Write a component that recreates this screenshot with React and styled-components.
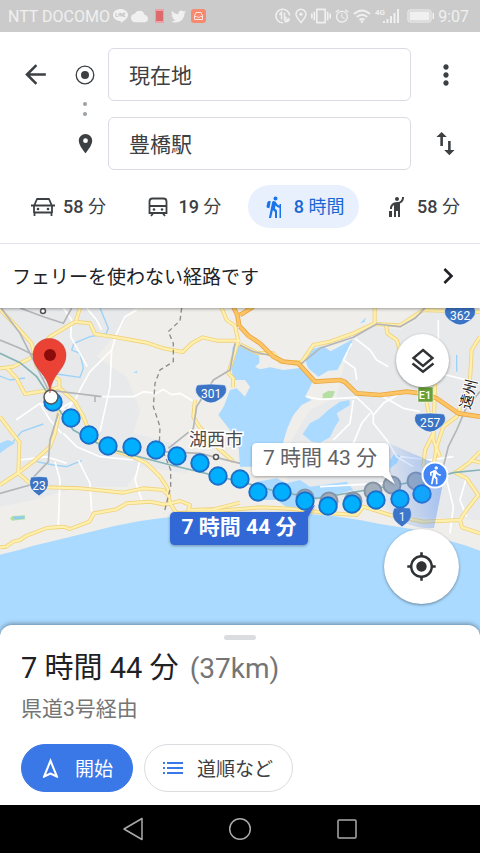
import React from 'react'
import styled, { createGlobalStyle } from 'styled-components';
import { FaTwitter } from 'react-icons/fa';
import {
    MdCloud, MdVibration, MdAlarm, MdArrowBack, MdMoreVert, MdSwapVert,
    MdLocationOn, MdHiking, MdHail, MdDirectionsWalk, MdChevronRight,
    MdMyLocation, MdOutlineNavigation
} from 'react-icons/md';

const GlobalStyle = createGlobalStyle`
  * {
    box-sizing: border-box;
  }
  body {
    margin: 0;
    background: #fff;
    font-family: Roboto, "Noto Sans CJK JP", sans-serif;
    color: #202124;
  }
  button, input {
    font: inherit;
    color: inherit;
    margin: 0;
    padding: 0;
    border: 0;
    background: none;
  }
  svg {
    display: block;
    flex: none;
  }
`;

const Page = styled.div`
  display: flex;
  flex-direction: column;
  min-height: 100vh;
`;

/* status bar */
const StatusBar = styled.div`
  display: flex;
  align-items: center;
  justify-content: space-between;
  height: 32px;
  padding: 0 11px 0 8px;
  background: #cbcbcb;
  color: #f0f0f0;
  font-size: 16px;
`;

const StatusGroup = styled.div`
  display: flex;
  align-items: center;
  gap: 3px;
`;

/* search */
const Search = styled.header`
  background: #fff;
  border-bottom: 1px solid #e4e5ec;
  padding: 16px 0 15px;
`;

const Places = styled.div`
  display: grid;
  grid-template-columns: 70px 30px 1fr 69px;
  grid-template-rows: 53px 53px;
  row-gap: 16px;
`;

const IconButton = styled.button`
  display: flex;
  align-items: center;
  justify-content: center;
  color: #3c4043;
`;

const Track = styled.div`
  grid-column: 2;
  grid-row: 1 / 3;
  display: flex;
  flex-direction: column;
  align-items: center;
  justify-content: space-between;
  padding: 17px 0 15px;
  color: #3c4043;
`;

const PlaceInput = styled.input`
  grid-column: 3;
  min-width: 0;
  margin-left: 8px;
  padding: 0 20px 2px;
  border: 1px solid #dadce3;
  border-radius: 6px;
  background: #fff;
  color: #3c4043;
  font-size: 21px;
  outline: none;
`;

const Modes = styled.nav`
  display: flex;
  justify-content: space-between;
  padding: 15px 6px 0 17px;
`;

const Mode = styled.button`
  display: flex;
  align-items: center;
  gap: 8px;
  height: 43px;
  padding: 0 14px;
  border-radius: 22px;
  font-size: 18px;
  white-space: nowrap;
  background: ${props => (props.$active ? '#e8f0fe' : 'transparent')};
  color: ${props => (props.$active ? '#1967d2' : '#3c4043')};
`;

const Time = styled.span`
  padding-bottom: 3px;

  b {
    font-weight: 500;
  }
`;

const Notice = styled.button`
  display: flex;
  align-items: center;
  justify-content: space-between;
  height: 64px;
  padding: 0 16px 0 12px;
  background: #fff;
  font-size: 19px;
  text-align: left;
  box-shadow: 0 1px 3px rgba(0, 0, 0, 0.35);
  clip-path: inset(0 0 -6px 0);
  z-index: 1;
`;

const Label = styled.span`
  padding-bottom: 2px;
`;

/* map */
const MapArea = styled.main`
  position: relative;
  flex: 1;
  min-height: 317px;
`;

const Canvas = styled.svg`
  position: absolute;
  top: 0;
  left: 0;
  width: 100%;
  height: calc(100% + 15px);
`;

const Fab = styled.button`
  position: absolute;
  right: ${props => props.$right}px;
  ${props => props.$edge}: ${props => props.$offset}px;
  display: flex;
  align-items: center;
  justify-content: center;
  width: ${props => props.$size}px;
  height: ${props => props.$size}px;
  border-radius: 50%;
  background: #fff;
  color: #303336;
  box-shadow: 0 1px 3px rgba(0, 0, 0, 0.4);
`;

/* bottom sheet */
const Sheet = styled.section`
  position: relative;
  padding: 10px 21px 13px;
  border-radius: 12px 12px 0 0;
  background: #fff;
  box-shadow: 0 -1px 5px rgba(0, 0, 0, 0.4);
`;

const Handle = styled.div`
  width: 32px;
  height: 5px;
  margin: 0 auto;
  border-radius: 3px;
  background: #dadce0;
`;

const Duration = styled.h1`
  margin: 10px 0 0;
  font-size: 29px;
  line-height: 36px;
  font-weight: 400;
`;

const Distance = styled.span`
  margin-left: 4px;
  font-size: 28px;
  line-height: 28px;
  color: #757575;
`;

const Via = styled.p`
  margin: 9px 0 0;
  font-size: 21px;
  line-height: 28px;
  color: #757575;
`;

const Actions = styled.div`
  display: flex;
  gap: 11px;
  margin-top: 21px;
`;

const Action = styled.button`
  display: flex;
  align-items: center;
  gap: 12px;
  height: 48px;
  padding: 0 19px 0 16px;
  border: 1px solid ${props => (props.$primary ? '#3b78e7' : '#dadce0')};
  border-radius: 24px;
  background: ${props => (props.$primary ? '#3b78e7' : '#fff')};
  color: ${props => (props.$primary ? '#fff' : '#3c4043')};
  font-size: 19px;
`;

const NavBar = styled.nav`
  position: relative;
  display: grid;
  grid-template-columns: repeat(3, 107px);
  justify-content: center;
  height: 48px;
  background: #000;
`;

const NavButton = styled.button`
  display: flex;
  align-items: center;
  justify-content: center;
`;

const modes = [
    { count: 58, unit: '分', name: '車', icon: <CarIcon /> },
    { count: 19, unit: '分', name: '電車', icon: <TrainIcon /> },
    { count: 8, unit: '時間', name: '徒歩', icon: <MdHiking size={24} color="#1a73e8" />, active: true },
    { count: 58, unit: '分', name: 'タクシー', icon: <MdHail size={24} /> },
];

// Terrain paths use three units for one map pixel
const urban = [
    'M0 24 H400 L350 100 L290 170 L380 230 L420 330 L400 400 L520 430 L600 470 L560 520 L420 500 L380 560 L240 560 L100 600 L0 620 Z',
    'M1050 120 L1120 80 L1200 90 L1300 24 H1440 V660 L1240 650 L1120 620 L900 600 L860 560 L870 430 L930 330 L1010 290 Z',
];

const lakes = [
    'M720 138 L750 152 L778 168 L778 190 L765 200 L780 208 L810 202 L850 210 L900 204 L925 215 L940 240 L930 262 L915 290 L935 300 L905 315 L880 345 L862 385 L848 432 L860 450 L860 500 L720 500 L715 430 L690 390 L655 345 L672 318 L690 270 L710 265 L735 290 L750 260 L735 240 L700 240 L692 190 L698 140 Z',
    'M925 150 L970 138 L992 154 L1058 118 L1050 150 L1025 185 L1012 210 L985 212 L955 230 L925 205 L918 188 Z',
    'M908 402 L930 370 L958 355 L985 330 L1020 305 L1048 300 L1050 315 L1010 340 L1018 360 L1005 380 L990 412 L960 428 L935 425 Z',
    'M770 545 L830 535 L860 550 L900 540 L930 560 L1040 545 L1060 570 L940 600 L910 625 L860 622 L830 600 L790 600 Z',
    'M0 430 L24 420 L46 428 L20 445 L0 460 Z',
    'M1170 480 L1182 462 L1200 468 L1190 490 L1170 505 Z',
    'M400 218 L410 212 L412 220 Z',
    'M1080 70 L1098 52 L1094 66 Z',
];

const sea = 'M0 764 L60 749 L100 737 L200 713 L270 696 L340 679 L420 663 L510 651 L640 642 L925 642 L1000 648 L1080 660 L1140 672 L1240 688 L1320 715 L1400 737 L1440 752 V1030 H0 Z';

const streams = [
    'M300 24 L325 85 L318 102 L270 110 L222 130 L215 150 L240 160 L250 205 L240 232 L170 222 L130 235',
    'M0 228 L30 240 L75 234',
    'M40 425 L65 395 L130 372',
    'M110 485 L160 495 L200 500 L245 482',
    'M1370 165 V215', 'M1260 115 L1268 150',
];

const lanes = [
    'M410 30 L375 50 L350 100 L335 150 L270 215 L245 260 L225 300 L175 330',
    'M190 24 L215 60 L212 110 L262 200',
    'M260 24 L290 60 L305 90',
    'M335 150 L330 260 L300 395',
    'M300 290 L400 290 L430 275 L470 280 L490 268 L515 284 L540 280 L590 310',
    'M48 360 L120 310 L200 330 L225 300', 'M190 400 L230 440 L300 470 L400 480',
    'M120 310 L150 360 L185 400', 'M60 480 L140 470 L200 490',
    'M165 485 L180 540 L175 675', 'M235 480 L270 550 L275 635', 'M420 480 L405 540 L425 600',
    'M1065 115 L1110 150 L1130 180 L1165 200', 'M1055 130 L1030 180 L1065 205 L1070 240',
    'M920 290 L960 298 L1070 292 L1110 330 L1120 345 L1120 370 L1160 420 L1190 470 L1240 500',
    'M1120 345 L1150 310 L1200 280', 'M1110 340 L1085 370 L1060 430',
    'M1150 290 L1210 325 L1260 335', 'M1315 60 V140', 'M1320 220 L1400 240',
    'M1060 300 L1050 370 L1000 420', 'M1330 500 L1360 620 L1350 700', 'M1400 530 L1380 600 L1400 650',
    'M1200 470 L1290 480 L1360 470', 'M960 560 L1150 550',
];

const rails = [
    'M0 20 L60 100 L110 200 L145 270', 'M0 120 L60 145 L130 180',
    'M60 24 L130 50 L190 70 L215 24', 'M145 270 L305 290 M285 290 V306',
    'M175 340 L150 420 L145 485 L102 530 L90 555 L0 580',
    'M505 445 L580 385 L590 320 L640 240 L690 210 L705 130',
    'M480 455 L600 460 L720 490',
    'M720 135 L760 155 L820 168 L850 188 L905 190 L960 145 L1060 112 L1130 72 L1200 80 L1245 55 L1275 24',
    'M1440 275 L1400 320 L1370 390 L1345 440 L1330 500',
];

const roads = [
    'M0 205 L40 200 L90 175 L150 110 L225 65 L270 70 L285 102 L350 112 L440 128 L490 145 L548 156 L575 130 L608 112 L650 122 L720 122',
    'M240 24 L228 62',
    'M0 28 L50 80 L95 130 L110 200 L178 240 L178 262 L150 270 L75 282 L50 235 L22 205',
    'M180 265 L225 305 L250 350 L275 410 L335 450 L400 470 L440 490 L480 530 L503 565 L510 610 L530 640',
    'M178 330 L165 400 L150 440 L100 485 L50 522 L0 555',
    'M0 350 L30 390 L58 425 L55 520 L90 550 L145 562 L240 565 L370 578 L430 565 L490 570 L508 590',
    'M0 742 L18 740 L40 725 L60 720 L78 708 L140 684 L190 680 L210 687 L268 665 L282 640 L350 628 L380 610 L450 605 L495 614 L540 603 L570 615 L565 630 L640 628 L720 608',
    'M665 24 L680 60 L705 78 L715 122 L685 220 L700 235 L698 262',
    'M585 300 L580 350 L598 380 L650 440 L700 485',
    'M530 640 L640 634 L780 622 L870 626 L970 638 L1070 645 L1090 620 L1170 645 L1270 665 L1380 660 L1400 630 L1435 585 L1400 535 L1360 515',
    'M1380 660 L1386 682 L1440 700',
    'M720 133 L770 158 L820 160 L842 186 L905 186 L940 135 L990 125 L1060 100 L1120 72 L1200 76 L1270 30 L1440 36',
    'M1124 24 V70', 'M1158 76 L1162 100 L1190 120 L1200 150',
    'M1305 250 L1300 420 L1320 470', 'M1285 260 L1280 310 L1300 400 L1275 450 L1270 500',
    'M1440 110 L1415 150 L1410 240 L1370 350 L1330 380 L1310 440 L1300 500',
    'M1440 455 L1405 490 L1370 515', 'M1410 480 L1440 488',
];

const motorways = [
    'M720 80 L745 107 L780 130 L820 170 L850 185 L895 190 L945 245 L1020 240 L1035 246 L1070 280 L1140 285 L1220 275 L1260 280 L1310 295 L1375 340 L1440 350',
    'M690 0 L712 45 L718 80', 'M720 45 L760 20',
];

const route = [
    [53, 94], [71, 110], [89, 127], [108, 138], [132, 139], [156, 142], [177, 148], [200, 155],
    [218, 168], [240, 171], [258, 184], [282, 184], [305, 193], [328, 198], [352, 196], [376, 192],
    [400, 191], [422, 186],
];

const otherRoute = [[305, 190], [329, 193], [353, 193], [373, 183], [392, 177], [416, 173]];

function CarIcon() {
    return (
        <svg width="24" height="20" viewBox="0 0 24 20" fill="none" stroke="currentColor" strokeWidth="1.800">
            <path d="M0 8.500H24M3 9L6 2H18L21 9V15.500H3ZM3.500 15V19M20.500 15V19" strokeLinejoin="round" />
            <circle cx="7" cy="12" r="1.300" fill="currentColor" stroke="none" />
            <circle cx="17" cy="12" r="1.300" fill="currentColor" stroke="none" />
        </svg>
    )
}

function TrainIcon() {
    return (
        <svg width="24" height="24" viewBox="0 0 24 24" fill="none" stroke="currentColor" strokeWidth="1.800">
            <path d="M3.500 18V6.500q0-3 3-3h11q3 0 3 3V18zM3.500 11h17M7 18.500l-2 2.500M17 18.500l2 2.500" />
            <circle cx="8" cy="14.500" r="1.300" fill="currentColor" stroke="none" />
            <circle cx="16" cy="14.500" r="1.300" fill="currentColor" stroke="none" />
        </svg>
    )
}

function Status() {
    return (
        <StatusBar>
            <StatusGroup>
                <span>NTT DOCOMO</span>
                <svg width="15" height="16" viewBox="0 0 15 16" fill="currentColor">
                    <path d="M7.500 1C11.700 1 15 3.600 15 7C15 10.500 11 13 7.500 15C8 13.800 8 13 7 13C3 12.700 0 10.200 0 7C0 3.600 3.300 1 7.500 1Z" />
                    <path d="M3 5V8.500H4.800M6 5V8.500M7.200 8.500V5L9.200 8.500V5M12.300 5H10.600V8.500H12.300M10.600 6.800H12" fill="none" stroke="#bbb" strokeWidth="0.800" />
                </svg>
                <MdCloud size={17} />
                <svg width="17" height="16" viewBox="0 0 17 16">
                    <rect x="4" y="1" width="9" height="14" fill="#f0a0a0" />
                    <rect x="5" y="3" width="7" height="10" fill="#dd6b6b" />
                </svg>
                <FaTwitter size={15} />
                <svg width="17" height="16" viewBox="0 0 17 16">
                    <rect x="2" y="1" width="15" height="14" rx="3" fill="#f58a70" />
                    <path d="M5.500 8l1.500-3.500h5L13.500 8v3.500h-8zM5.500 8.500h2q2 2.500 4 0h2" fill="none" stroke="#fbe3dd" />
                </svg>
            </StatusGroup>
            <StatusGroup>
                <svg width="16" height="16" viewBox="0 0 16 16" fill="none" stroke="currentColor" strokeWidth="1.500">
                    <path d="M14.500 7.500A6.800 6.800 0 1 0 8 14.800" />
                    <path d="M6.500 11.500V4.500L4.500 7M9.500 4.500v7l2-2.500" />
                    <path d="M9.500 14.500q0-4 5.500-4.500q0 5-5.500 4.500z" fill="currentColor" stroke="none" />
                </svg>
                <svg width="14" height="16" viewBox="0 0 14 16" fill="none" stroke="currentColor" strokeWidth="1.500">
                    <path d="M7 14.500C4 11 2 8.500 2 6.200A5 5 0 0 1 12 6.200C12 8.500 10 11 7 14.500Z" />
                    <circle cx="7" cy="6.200" r="1.600" fill="currentColor" stroke="none" />
                </svg>
                <MdVibration size={20} />
                <MdAlarm size={16} />
                <svg width="18" height="16" viewBox="0 0 18 16" fill="none" stroke="currentColor" strokeWidth="2">
                    <path d="M1 6q8-7 16 0M3.800 9q5.200-4.500 10.400 0M6.500 12q2.500-2 5 0" />
                    <circle cx="9" cy="13.800" r="1.200" fill="currentColor" stroke="none" />
                </svg>
                <svg width="30" height="16" viewBox="0 0 30 16" fill="currentColor">
                    <text x="1" y="7" fontSize="8" fontWeight="700">4G</text>
                    <path d="M9 13h2v2H9zM12.500 11h2v4h-2zM16 8h2v7h-2zM19.500 5h2v10h-2zM23 1h2v14h-2z" />
                </svg>
                <svg width="28" height="14" viewBox="0 0 28 14">
                    <rect x="1" y="1" width="23" height="12" rx="2" fill="none" stroke="currentColor" />
                    <path d="M2.500 2.500h20v9h-20zM25.500 4H27v6h-1.500z" fill="currentColor" />
                </svg>
                <span>9:07</span>
            </StatusGroup>
        </StatusBar>
    )
}

function Shield({ x, y, wide, children }) {
    return (
        <g transform={`translate(${x} ${y})`}>
            <path
                d={wide
                    ? 'M-14 -9Q0 -11 14 -9Q19 -1 8 6Q0 12 -8 6Q-19 -1 -14 -9Z'
                    : 'M-8 -9Q0 -10 8 -9Q12 0 5 6L0 10L-5 6Q-12 0 -8 -9Z'}
                fill="#3b74c4"
                stroke="#fff"
                strokeWidth="0.600"
            />
            <text y="4" textAnchor="middle" fontSize="12" fill="#fff">{children}</text>
        </g>
    )
}

function Lines({ paths, color, width }) {
    return (
        <g fill="none" stroke={color} strokeWidth={width} strokeLinejoin="round">
            {paths.map(d => <path key={d} d={d} />)}
        </g>
    )
}

function RouteMap() {
    return (
        <Canvas viewBox="0 0 480 332" preserveAspectRatio="xMidYMid slice" role="img" aria-label="経路の地図">
            <defs>
                <linearGradient id="beam" x1="1" y1="0.300" x2="0" y2="0.500">
                    <stop offset="0" stopColor="#4285f4" stopOpacity="0.450" />
                    <stop offset="1" stopColor="#4285f4" stopOpacity="0.050" />
                </linearGradient>
                <filter id="shadow" x="-10%" y="-20%" width="120%" height="150%">
                    <feDropShadow dx="0" dy="1" stdDeviation="1.500" floodOpacity="0.350" />
                </filter>
            </defs>
            <rect width="480" height="332" fill="#efeeea" />
            <g transform="translate(0 -8) scale(0.333333)">
                {urban.map(d => <path key={d} d={d} fill="#e8e9eb" />)}
                {lakes.map(d => <path key={d} d={d} fill="#aadaff" />)}
                <path d={sea} fill="#aadaff" />
                <path d="M968 282 L985 272 L1005 274 L998 292 L975 300 L968 296 Z" fill="#b5dfa4" />
                <path d="M30 655 L38 648 L75 646 L75 658 L36 662 Z" fill="#b5dfa4" />
                <path d="M40 650 L73 648 V656 L40 658 Z" fill="#8fcdf0" />
                <Lines paths={streams} color="#9bd3f8" width={4} />
                <Lines paths={lanes} color="#fff" width={5} />
                <Lines paths={roads} color="#f0d27c" width={12} />
                <Lines paths={roads} color="#fff0ae" width={7} />
                <Lines paths={rails} color="#b4b5b8" width={5} />
                <Lines paths={motorways} color="#eaa63f" width={14} />
                <Lines paths={motorways} color="#fdc566" width={9} />
                <path
                    d="M0 160 L60 188 L110 230 L150 290 L220 390 L320 445 L500 492 L720 545 L820 572 L950 595 L1100 570 L1300 535 L1360 518 L1440 510"
                    fill="none"
                    stroke="#86b3b6"
                    strokeWidth="5"
                />
                <path
                    d="M545 24 L540 62 L505 95 L520 130 L520 185 L480 210 L465 250 L460 320 L480 380 L478 430 L500 480 L512 510 L512 560 L492 640"
                    fill="none"
                    stroke="#8d8d8d"
                    strokeWidth="4"
                    strokeDasharray="14 10"
                />
            </g>

            <g fill="#fff" stroke="#555" strokeWidth="1.500">
                <circle cx="43" cy="3" r="2.500" />
                <circle cx="216" cy="149" r="2.500" />
            </g>
            <text x="189" y="138" fontSize="18" fill="#4c4c4c" stroke="#fff" strokeWidth="3" paintOrder="stroke">湖西市</text>
            <text
                transform="translate(470 102) rotate(-76)"
                fontSize="15"
                fill="#222"
                stroke="#fff"
                strokeWidth="2"
                paintOrder="stroke"
            >
                遠州
            </text>

            <Shield x={460} y={8} wide>362</Shield>
            <Shield x={211} y={86} wide>301</Shield>
            <Shield x={430} y={115} wide>257</Shield>
            <Shield x={39} y={178}>23</Shield>
            <Shield x={402} y={209}>1</Shield>
            <rect x="418" y="79" width="15" height="15" fill="#689f38" stroke="#fff" strokeWidth="0.500" />
            <text x="425" y="91" textAnchor="middle" fontSize="11" fontWeight="500" fill="#fff">E1</text>

            <g fill="#a3afbb" stroke="#8593a6" strokeWidth="2">
                {otherRoute.map(([x, y]) => <circle key={x} cx={x} cy={y} r="8.500" />)}
            </g>
            <g fill="#00b0ff" stroke="#1b6fc8" strokeWidth="2">
                {route.map(([x, y]) => <circle key={x} cx={x} cy={y} r="8.700" />)}
            </g>
            <path d="M386 134 L446 160 L434 220 Q405 222 386 200 Z" fill="url(#beam)" />

            <g filter="url(#shadow)">
                <path d="M257 135H384Q389 135 389 140V164L395 176L383 168H257Q252 168 252 163V140Q252 135 257 135Z" fill="#fff" />
            </g>
            <text x="320" y="157" textAnchor="middle" fontSize="21" fill="#5f6368">7 時間 43 分</text>
            <g filter="url(#shadow)">
                <path d="M175 204H303L315 197L308 209V232Q308 237 303 237H175Q170 237 170 232V209Q170 204 175 204Z" fill="#3367d6" />
            </g>
            <text x="239" y="226" textAnchor="middle" fontSize="21" fontWeight="700" fill="#fff">7 時間 44 分</text>

            <circle cx="435" cy="167" r="12.500" fill="#4285f4" stroke="#fff" strokeWidth="2" />
            <MdDirectionsWalk x="425" y="157" size={20} color="#fff" />

            <circle cx="51" cy="89" r="7" fill="#fff" stroke="#555" strokeWidth="1.500" />
            <path d="M50 85C49 66 33 62 33 47A16.500 16.500 0 0 1 66 47C66 62 51 66 50 85Z" fill="#ea4335" stroke="#c5352a" strokeWidth="0.500" />
            <circle cx="50" cy="47" r="6" fill="#8c0b0b" />
        </Canvas>
    )
}

function App() {
    return (
        <Page>
            <GlobalStyle />
            <Status />
            <Search>
                <Places>
                    <IconButton aria-label="戻る"><MdArrowBack size={31} /></IconButton>
                    <Track>
                        <svg width="20" height="20" viewBox="0 0 20 20">
                            <circle cx="10" cy="10" r="8.800" fill="none" stroke="currentColor" strokeWidth="1.300" />
                            <circle cx="10" cy="10" r="4" fill="currentColor" />
                        </svg>
                        <svg width="4" height="14" viewBox="0 0 4 14" fill="#9aa0a6">
                            <circle cx="2" cy="2" r="2" />
                            <circle cx="2" cy="12" r="2" />
                        </svg>
                        <MdLocationOn size={23} />
                    </Track>
                    <PlaceInput aria-label="出発地" defaultValue="現在地" />
                    <IconButton aria-label="メニュー"><MdMoreVert size={32} /></IconButton>
                    <PlaceInput aria-label="目的地" defaultValue="豊橋駅" />
                    <IconButton aria-label="入れ替え"><MdSwapVert size={31} /></IconButton>
                </Places>
                <Modes>
                    {modes.map(mode => (
                        <Mode key={mode.name} $active={mode.active} aria-label={`${mode.name} ${mode.count} ${mode.unit}`}>
                            {mode.icon}
                            <Time><b>{mode.count}</b> {mode.unit}</Time>
                        </Mode>
                    ))}
                </Modes>
            </Search>
            <Notice>
                <Label>フェリーを使わない経路です</Label>
                <MdChevronRight size={32} />
            </Notice>
            <MapArea>
                <RouteMap />
                <Fab $size={53} $right={31} $edge="top" $offset={26} aria-label="レイヤ">
                    <svg width="24" height="26" viewBox="0 0 24 26" fill="none" stroke="currentColor" strokeWidth="2.400">
                        <path d="M12 2L21.500 10L12 18L2.500 10Z" />
                        <path d="M1.500 15.500L12 23.800L22.500 15.500" />
                    </svg>
                </Fab>
                <Fab $size={75} $right={21} $edge="bottom" $offset={21} aria-label="現在地を表示">
                    <MdMyLocation size={31} />
                </Fab>
            </MapArea>
            <Sheet>
                <Handle />
                <Duration>7 時間 44 分 <Distance>(37km)</Distance></Duration>
                <Via>県道3号経由</Via>
                <Actions>
                    <Action $primary><MdOutlineNavigation size={25} /><Label>開始</Label></Action>
                    <Action>
                        <svg width="24" height="24" viewBox="0 0 24 24" stroke="#3b78e7" strokeWidth="2">
                            <path d="M2 7h2M6 7h16M2 12h2M6 12h16M2 17h2M6 17h16" />
                        </svg>
                        <Label>道順など</Label>
                    </Action>
                </Actions>
            </Sheet>
            <NavBar>
                <NavButton aria-label="戻る">
                    <svg width="22" height="24" viewBox="0 0 22 24" fill="none" stroke="#aaa" strokeWidth="1.500">
                        <path d="M20 1.500V22.500L2 12Z" strokeLinejoin="round" />
                    </svg>
                </NavButton>
                <NavButton aria-label="ホーム">
                    <svg width="24" height="24" viewBox="0 0 24 24" fill="none" stroke="#aaa" strokeWidth="1.500">
                        <circle cx="12" cy="12" r="10.300" />
                    </svg>
                </NavButton>
                <NavButton aria-label="最近使ったアプリ">
                    <svg width="22" height="22" viewBox="0 0 22 22" fill="none" stroke="#aaa" strokeWidth="1.500">
                        <rect x="2" y="2" width="18" height="18" rx="1" />
                    </svg>
                </NavButton>
            </NavBar>
        </Page>
    )
}

export default App
